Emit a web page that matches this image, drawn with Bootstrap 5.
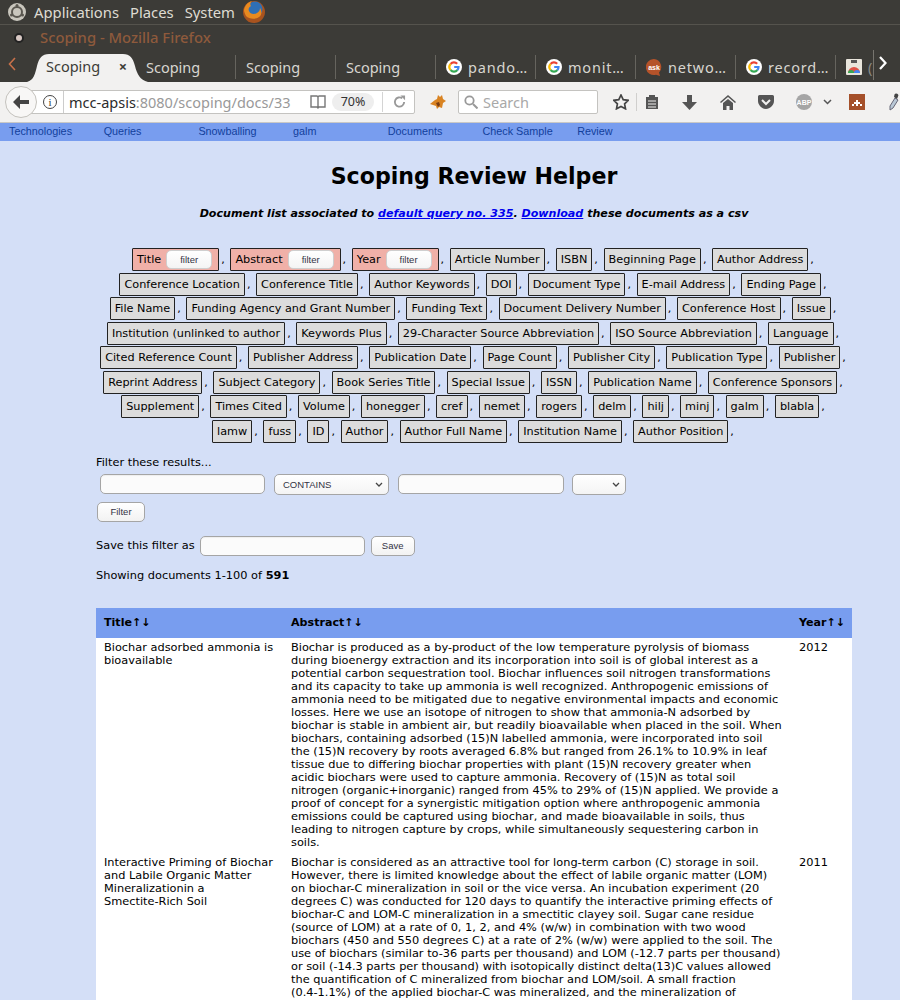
<!DOCTYPE html>
<html lang="en">
<head>
<meta charset="UTF-8">
<title>Scoping</title>
<link rel="stylesheet" href="https://cdn.jsdelivr.net/npm/bootstrap@5.3.0/dist/css/bootstrap.min.css">
<style>
html, body { height: 1000px; overflow: hidden; }
body { background: #d4dff7; font-family: "DejaVu Sans", sans-serif; font-size: 11.35px; color: #000; line-height: 13px; }
.os-bar { height: 24px; background: #3c3b37; color: #dfdbd2; font-family: "Noto Sans", sans-serif; font-size: 14.8px; gap: 7px; padding-left: 7px; }
.os-bar span { margin-right: 4px; }
.win-title { height: 26px; background: #3c3b37; border-top: 1px solid #55534d; font-family: "Noto Sans", sans-serif; font-size: 14.8px; color: #8e5a3c; font-weight: 500; padding-left: 40px; position: relative; }
.win-dot { position: absolute; left: 14px; top: 8px; width: 10px; height: 10px; border-radius: 50%; background: #d9c9c4; border: 2px solid #222; }
.tab-strip { height: 32px; background: #3c3b37; color: #d8d6d0; font-family: "Noto Sans", sans-serif; font-size: 14.5px; }
.tab-arrow { width: 36px; padding-left: 8px; padding-bottom: 4px; }
.tab-on { width: 100px; height: 28px; margin-top: 4px; color: #3c3b37; padding: 0 9px 3px 10px; position: relative; }
.tab-on span, .tab-on b { position: relative; }
.tab-shape { position: absolute; left: -9px; top: 0; }
.tab-off { width: 100px; height: 24px; margin-top: 5px; padding-left: 10px; border-right: 1px solid #66645e; white-space: nowrap; }
.tab-off svg { margin-right: 6px; flex: none; }
.tab-fav { letter-spacing: .8px; }
.tab-strip-end { width: 27px; padding-left: 5px; padding-bottom: 4px; border-left: 1px solid #77756f; height: 30px; }
.tool-bar { height: 41px; background: #f2f1f0; border-bottom: 1px solid #c9c8c6; position: relative; padding-left: 16px; }
.back-round { position: absolute; left: 5px; top: 4px; width: 32px; height: 32px; border-radius: 50%; background: #f8f7f6; border: 1px solid #c4c2bd; z-index: 1; }
.url-box { width: 399px; height: 24px; background: #fff; border: 1px solid #c4c3c0; border-radius: 2px; font-family: "Noto Sans", sans-serif; font-size: 14.5px; color: #2b2b2b; padding-left: 27px; position: relative; }
.url-info { position: absolute; left: 26px; top: 4px; width: 14px; height: 14px; border: 1px solid #444; border-radius: 50%; font-family: "Liberation Serif", serif; font-size: 11px; line-height: 12px; text-align: center; color: #333; }
.url-text { margin-left: 19px; padding-left: 5px; border-left: 1px solid #ccc; width: 226px; white-space: nowrap; line-height: 22px; }
.url-text em { font-style: normal; color: #999; }
.zoom-pill { background: #eeeeee; border-radius: 9px; font-size: 12.5px; width: 42px; text-align: center; line-height: 18px; margin-left: 6px; color: #333; }
.url-sep { width: 1px; height: 20px; background: #d4d4d4; margin-left: 8px; }
.search-box { width: 140px; height: 24px; background: #fff; border: 1px solid #c4c3c0; border-radius: 2px; font-family: "Noto Sans", sans-serif; font-size: 14.5px; color: #a8a8a8; padding-left: 5px; gap: 5px; }
.tool-sep { width: 1px; height: 18px; background: #d0cfcd; margin: 0 8px 0 7px; }
.site-nav { height: 18px; background: #789def; font-family: "Liberation Sans", sans-serif; font-size: 10.8px; color: #123f9c; padding-left: 9px; padding-bottom: 1px; }
.site-nav a { width: 94.7px; color: #123f9c; text-decoration: none; display: block; }
.main-wrap { padding: 0 48px 0 96px; }
.page-head { font-size: 22.1px; font-weight: 700; text-align: center; margin: 22px 0 0; line-height: 27px; }
.page-sub { font-size: 11.1px; font-weight: 700; font-style: italic; text-align: center; margin: 17px 0 0; line-height: 13px; }
.page-sub a { color: #0000ee; }
.fld-cloud { text-align: center; margin: 28.4px 0 0 3px; line-height: 24.5px; width: 750px; font-size: 11.25px; }
.fld { display: inline-block; background: #dcdcdc; border: 1px solid #222; border-radius: 1px; padding: 0 4px; line-height: 21px; margin-right: 2px; height: 23px; }
.fld-on { background: #f0b0a8; }
.fld-pill { display: inline-block; width: 46px; height: 19px; line-height: 18px; font-size: 9.5px; text-align: center; background: linear-gradient(#ffffff, #f4f4f4); border: 1px solid #cfcfcf; border-radius: 5px; margin: 1px 2px 0 5px; color: #334; vertical-align: top; font-family: "Liberation Sans", "DejaVu Sans", sans-serif; }
.fld-sep { margin-right: 2px; }
.ctl-input { height: 20px; border: 1px solid #a5a5a5; border-radius: 5px; background: #fbfbfb; box-shadow: inset 0 1px 1px #eee; }
.ctl-pick { height: 21px; border: 1px solid #a5a5a5; border-radius: 5px; background: linear-gradient(#fff, #f4f4f4); font-family: "Liberation Sans", sans-serif; font-size: 9.5px; color: #334; padding: 0 5px 0 8px; }
.ctl-btn { height: 20px; border: 1px solid #a5a5a5; border-radius: 5px; background: linear-gradient(#fff, #f2f2f2); font-family: "Liberation Sans", sans-serif; font-size: 9.5px; color: #334; line-height: 18px; text-align: center; }
.doc-tbl { width: 756px; margin-top: 26px; border-collapse: collapse; table-layout: fixed; background: #fff; }
.doc-tbl th { background: #789def; height: 30px; padding: 0 8px; font-weight: 700; font-size: 11.1px; }
.doc-tbl td { padding: 3px 8px 4px; vertical-align: top; line-height: 13px; }
</style>
</head>
<body>

<svg width="0" height="0" class="d-block">
  <symbol id="g-icon" viewBox="0 0 16 16">
    <circle cx="8" cy="8" r="8" fill="#fff"/>
    <g fill="none" stroke-width="2.2">
      <path d="M4.600 5A4.500 4.500 0 0 1 11.200 4.800" stroke="#ea4335"/>
      <path d="M4.600 5A4.500 4.500 0 0 0 4.600 11" stroke="#fbbc05"/>
      <path d="M4.600 11A4.500 4.500 0 0 0 11.400 11" stroke="#34a853"/>
      <path d="M11.400 11A4.500 4.500 0 0 0 12.500 8H8.200" stroke="#4285f4"/>
    </g>
  </symbol>
</svg>

<!-- desktop panel -->
<div class="os-bar d-flex align-items-center">
  <svg width="20" height="20" viewBox="0 0 20 20"><circle cx="10" cy="10" r="9" fill="#c9c6bd"/><circle cx="10" cy="10" r="5" fill="none" stroke="#5a5750" stroke-width="2"/><circle cx="10" cy="3.5" r="1.500" fill="#5a5750"/><circle cx="4.500" cy="13" r="1.500" fill="#5a5750"/><circle cx="15.500" cy="13" r="1.500" fill="#5a5750"/></svg>
  <span>Applications</span><span>Places</span><span>System</span>
  <svg width="24" height="24" viewBox="0 0 24 24" style="margin-left:-4px"><circle cx="12" cy="12" r="11" fill="#a8531f"/><circle cx="13" cy="9" r="7.500" fill="#2f6fb5"/><path d="M2 10c1-5 4-8 8-9-2 2-2 4-1 5-2 1-3 3-2 5 1 3 5 4 8 2 2-1 3-3 3-5 2 3 2 7-1 9-4 3-10 2-13-1-1-2-2-4-2-6z" fill="#e88a20"/></svg>
</div>
<div class="win-title d-flex align-items-center"><i class="win-dot"></i>Scoping - Mozilla Firefox</div>

<!-- tabs -->
<div class="tab-strip d-flex">
  <div class="tab-arrow d-flex align-items-center"><svg width="8" height="14" viewBox="0 0 8 14"><path d="M7 1 1.500 7 7 13" fill="none" stroke="#c8714a" stroke-width="1.600"/></svg></div>
  <div class="tab-on d-flex align-items-center justify-content-between">
    <svg class="tab-shape" width="122" height="28" viewBox="0 0 122 28"><path d="M0 28C7 26 8 20 10 12 12 4 15 0 22 0H96C103 0 106 4 108 12 110 20 113 26 121 28Z" fill="#f2f1f0"/></svg>
    <span>Scoping</span><b>×</b>
  </div>
  <div class="tab-off d-flex align-items-center">Scoping</div>
  <div class="tab-off d-flex align-items-center">Scoping</div>
  <div class="tab-off d-flex align-items-center">Scoping</div>
  <div class="tab-off tab-fav d-flex align-items-center"><svg width="16" height="16"><use href="#g-icon"/></svg>pando…</div>
  <div class="tab-off tab-fav d-flex align-items-center"><svg width="16" height="16"><use href="#g-icon"/></svg>monit…</div>
  <div class="tab-off tab-fav d-flex align-items-center"><svg width="16" height="17" viewBox="0 0 16 17"><path d="M8 0a8 8 0 1 0 2 15.700L14 17l-1-3.500A8 8 0 0 0 8 0z" fill="#b5532a"/><text x="8" y="10.500" font-size="7" font-weight="700" text-anchor="middle" fill="#fff" font-family="Liberation Sans" letter-spacing="0">ask</text></svg>netwo…</div>
  <div class="tab-off tab-fav d-flex align-items-center"><svg width="16" height="16"><use href="#g-icon"/></svg>record…</div>
  <div class="tab-off d-flex align-items-center" style="width:37px;border-right:0"><svg width="16" height="16" viewBox="0 0 16 16"><rect width="16" height="16" rx="1" fill="#e9e5dc"/><rect x="5" y="1" width="6" height="3" fill="#555"/><path d="M2 14a6 6 0 0 1 12 0z" fill="#de5246"/><path d="M8 14a3 3 0 0 1 6 0z" fill="#4285f4"/><path d="M2 14a3 3 0 0 1 6 0z" fill="#34a853"/></svg><span style="opacity:.5">(</span></div>
  <div class="tab-strip-end d-flex align-items-center"><svg width="8" height="14" viewBox="0 0 8 14"><path d="M1 1l5.500 6L1 13" fill="none" stroke="#fff" stroke-width="2.200"/></svg></div>
</div>

<!-- browser toolbar -->
<div class="tool-bar d-flex align-items-center">
  <div class="back-round d-flex align-items-center justify-content-center"><svg width="16" height="14" viewBox="0 0 16 14"><path d="M7 0 0 7l7 7V9h9V5H7z" fill="#444"/></svg></div>
  <div class="url-box d-flex align-items-center">
    <span class="url-info">i</span>
    <span class="url-text">mcc-apsis<em>:8080/scoping/docs/33</em></span>
    <svg width="16" height="14" viewBox="0 0 16 14" style="margin-left:21px"><path d="M1 1h6l1 1 1-1h6v11H9l-1 1-1-1H1zM8 2v10" fill="none" stroke="#777" stroke-width="1.400"/></svg>
    <span class="zoom-pill">70%</span>
    <i class="url-sep"></i>
    <svg width="13" height="14" viewBox="0 0 14 14" style="margin-left:10px"><path d="M12 7a5 5 0 1 1-2-4" fill="none" stroke="#999" stroke-width="2"/><path d="M8 0h5v5z" fill="#999"/></svg>
  </div>
  <svg width="16" height="15" viewBox="0 0 16 15" style="margin:0 12px 0 15px"><path d="M0 9l5-4 2-1 1-4 2 2 2-2 1 4 3 2-3 2-1 5-3-1-2 2-1-3z" fill="#d98322"/><path d="M6 8l3-1 1 3-2 2z" fill="#7a3d12"/></svg>
  <div class="search-box d-flex align-items-center"><svg width="14" height="14" viewBox="0 0 14 14"><circle cx="5.500" cy="5.500" r="4.200" fill="none" stroke="#999" stroke-width="1.800"/><path d="M9 9l4.500 4.500" stroke="#999" stroke-width="2"/></svg>Search</div>
  <div class="d-flex align-items-center" style="margin-left:15px">
    <svg width="16" height="16" viewBox="0 0 16 16"><path d="M8 1l2.200 4.600 5 .7-3.600 3.500.9 5L8 12.400l-4.500 2.400.9-5L.8 6.300l5-.7z" fill="none" stroke="#444" stroke-width="1.700"/></svg>
    <i class="tool-sep"></i>
    <svg width="14" height="16" viewBox="0 0 14 16"><path d="M1 3h3V1h6v2h3v12H1z" fill="#555"/><path d="M3 7h8M3 10h8M3 13h8" stroke="#f2f1f0"/></svg>
    <svg width="15" height="15" viewBox="0 0 15 15" style="margin-left:23px"><path d="M5 0h5v7h5l-7.500 8L0 7h5z" fill="#555"/></svg>
    <svg width="16" height="15" viewBox="0 0 16 15" style="margin-left:23px"><path d="M8 0l8 7-1 1-7-6-7 6-1-1zM3 8l5-4 5 4v7H9.500v-4h-3v4H3z" fill="#555"/></svg>
    <svg width="16" height="14" viewBox="0 0 16 14" style="margin-left:22px"><path d="M1.500 0h13A1.500 1.500 0 0 1 16 1.500V6c0 4-4 8-8 8S0 10 0 6V1.500A1.500 1.500 0 0 1 1.500 0z" fill="#555"/><path d="M4 5l4 4 4-4" fill="none" stroke="#f2f1f0" stroke-width="2"/></svg>
    <svg width="16" height="16" viewBox="0 0 16 16" style="margin-left:22px"><circle cx="8" cy="8" r="8" fill="#a5a5a5"/><text x="8" y="11" font-size="7" text-anchor="middle" fill="#fff" font-family="Liberation Sans" font-weight="700">ABP</text></svg>
    <svg width="9" height="6" viewBox="0 0 9 6" style="margin-left:11px"><path d="M1 1l3.500 3.500L8 1" fill="none" stroke="#555" stroke-width="1.500"/></svg>
    <svg width="16" height="16" viewBox="0 0 16 16" style="margin-left:17px"><rect width="16" height="16" fill="#a5502a"/><path d="M3 10h2V8h2V6h2v2h2v2h2v2h-2v-2H9v2H7v-2H5v2H3z" fill="#fff"/></svg>
    <svg width="10" height="18" viewBox="0 0 10 18" style="margin-left:24px"><path d="M6 5l3 2-5 8-3 2 0-4z" fill="#b9c8d6" stroke="#667"/><path d="M5.500 1.500a2 2 0 0 1 3.500 2L8 6 5 4z" fill="#444"/></svg>
  </div>
</div>

<!-- site nav -->
<div class="site-nav d-flex align-items-center">
  <a href="#">Technologies</a><a href="#">Queries</a><a href="#">Snowballing</a><a href="#">galm</a><a href="#">Documents</a><a href="#">Check Sample</a><a href="#">Review</a>
</div>

<div class="main-wrap">
  <h1 class="page-head">Scoping Review Helper</h1>
  <p class="page-sub">Document list associated to <a href="#">default query no. 335</a>. <a href="#">Download</a> these documents as a csv</p>

  <div class="fld-cloud" id="cloud"></div>

  <div style="margin-top:11.6px">Filter these results...</div>
  <div class="d-flex align-items-start" style="margin:5px 0 0 4px">
    <div class="ctl-input" style="width:165px"></div>
    <div class="ctl-pick d-flex align-items-center justify-content-between" style="width:115px;margin-left:9px"><span>CONTAINS</span><svg width="8" height="5" viewBox="0 0 8 5"><path d="M1 1l3 3 3-3" fill="none" stroke="#444" stroke-width="1.300"/></svg></div>
    <div class="ctl-input" style="width:166px;margin-left:9px"></div>
    <div class="ctl-pick d-flex align-items-center justify-content-end" style="width:54px;margin-left:8px"><svg width="8" height="5" viewBox="0 0 8 5"><path d="M1 1l3 3 3-3" fill="none" stroke="#444" stroke-width="1.300"/></svg></div>
  </div>
  <div class="ctl-btn" style="width:48px;margin:7px 0 0 1px">Filter</div>
  <div class="d-flex align-items-center" style="margin-top:14px">
    <span>Save this filter as</span>
    <div class="ctl-input" style="width:165px;margin-left:5px"></div>
    <div class="ctl-btn" style="width:44px;margin-left:6px">Save</div>
  </div>
  <div style="margin-top:13px">Showing documents 1-100 of <b>591</b></div>

  <table class="doc-tbl">
    <colgroup><col style="width:187px"><col style="width:508px"><col style="width:61px"></colgroup>
    <thead><tr><th>Title↑↓</th><th>Abstract↑↓</th><th>Year↑↓</th></tr></thead>
    <tbody>
      <tr>
        <td>Biochar adsorbed ammonia is bioavailable</td>
        <td>Biochar is produced as a by-product of the low temperature pyrolysis of biomass during bioenergy extraction and its incorporation into soil is of global interest as a potential carbon sequestration tool. Biochar influences soil nitrogen transformations and its capacity to take up ammonia is well recognized. Anthropogenic emissions of ammonia need to be mitigated due to negative environmental impacts and economic losses. Here we use an isotope of nitrogen to show that ammonia-N adsorbed by biochar is stable in ambient air, but readily bioavailable when placed in the soil. When biochars, containing adsorbed (15)N labelled ammonia, were incorporated into soil the (15)N recovery by roots averaged 6.8% but ranged from 26.1% to 10.9% in leaf tissue due to differing biochar properties with plant (15)N recovery greater when acidic biochars were used to capture ammonia. Recovery of (15)N as total soil nitrogen (organic+inorganic) ranged from 45% to 29% of (15)N applied. We provide a proof of concept for a synergistic mitigation option where anthropogenic ammonia emissions could be captured using biochar, and made bioavailable in soils, thus leading to nitrogen capture by crops, while simultaneously sequestering carbon in soils.</td>
        <td>2012</td>
      </tr>
      <tr>
        <td>Interactive Priming of Biochar and Labile Organic Matter Mineralizationin a <span class="text-nowrap">Smectite-Rich</span> Soil</td>
        <td>Biochar is considered as an attractive tool for long-term carbon (C) storage in soil. However, there is limited knowledge about the effect of labile organic matter (LOM) on biochar-C mineralization in soil or the vice versa. An incubation experiment (20 degrees C) was conducted for 120 days to quantify the interactive priming effects of biochar-C and LOM-C mineralization in a smectitic clayey soil. Sugar cane residue (source of LOM) at a rate of 0, 1, 2, and 4% (w/w) in combination with two wood biochars (450 and 550 degrees C) at a rate of 2% (w/w) were applied to the soil. The use of biochars (similar to-36 parts per thousand) and LOM (-12.7 parts per thousand) or soil (-14.3 parts per thousand) with isotopically distinct delta(13)C values allowed the quantification of C mineralized from biochar and LOM/soil. A small fraction <span class="text-nowrap">(0.4-1.1%)</span> of the applied biochar-C was mineralized, and the mineralization of</td>
        <td>2011</td>
      </tr>
    </tbody>
  </table>
</div>

<script>
  // field list, rendered from data
  const fields = ["Title","Abstract","Year","Article Number","ISBN","Beginning Page","Author Address","Conference Location","Conference Title","Author Keywords","DOI","Document Type","E-mail Address","Ending Page","File Name","Funding Agency and Grant Number","Funding Text","Document Delivery Number","Conference Host","Issue","Institution (unlinked to author","Keywords Plus","29-Character Source Abbreviation","ISO Source Abbreviation","Language","Cited Reference Count","Publisher Address","Publication Date","Page Count","Publisher City","Publication Type","Publisher","Reprint Address","Subject Category","Book Series Title","Special Issue","ISSN","Publication Name","Conference Sponsors","Supplement","Times Cited","Volume","honegger","cref","nemet","rogers","delm","hilj","minj","galm","blabla","lamw","fuss","ID","Author","Author Full Name","Institution Name","Author Position"];
  const on = ["Title","Abstract","Year"];
  document.getElementById('cloud').innerHTML = fields.map(f => on.includes(f)
    ? `<span class="fld fld-on">${f}<span class="fld-pill">filter</span></span><span class="fld-sep">,</span> `
    : `<span class="fld">${f}</span><span class="fld-sep">,</span> `).join('');
</script>
<script src="https://cdn.jsdelivr.net/npm/bootstrap@5.3.0/dist/js/bootstrap.bundle.min.js"></script>
</body>
</html>
